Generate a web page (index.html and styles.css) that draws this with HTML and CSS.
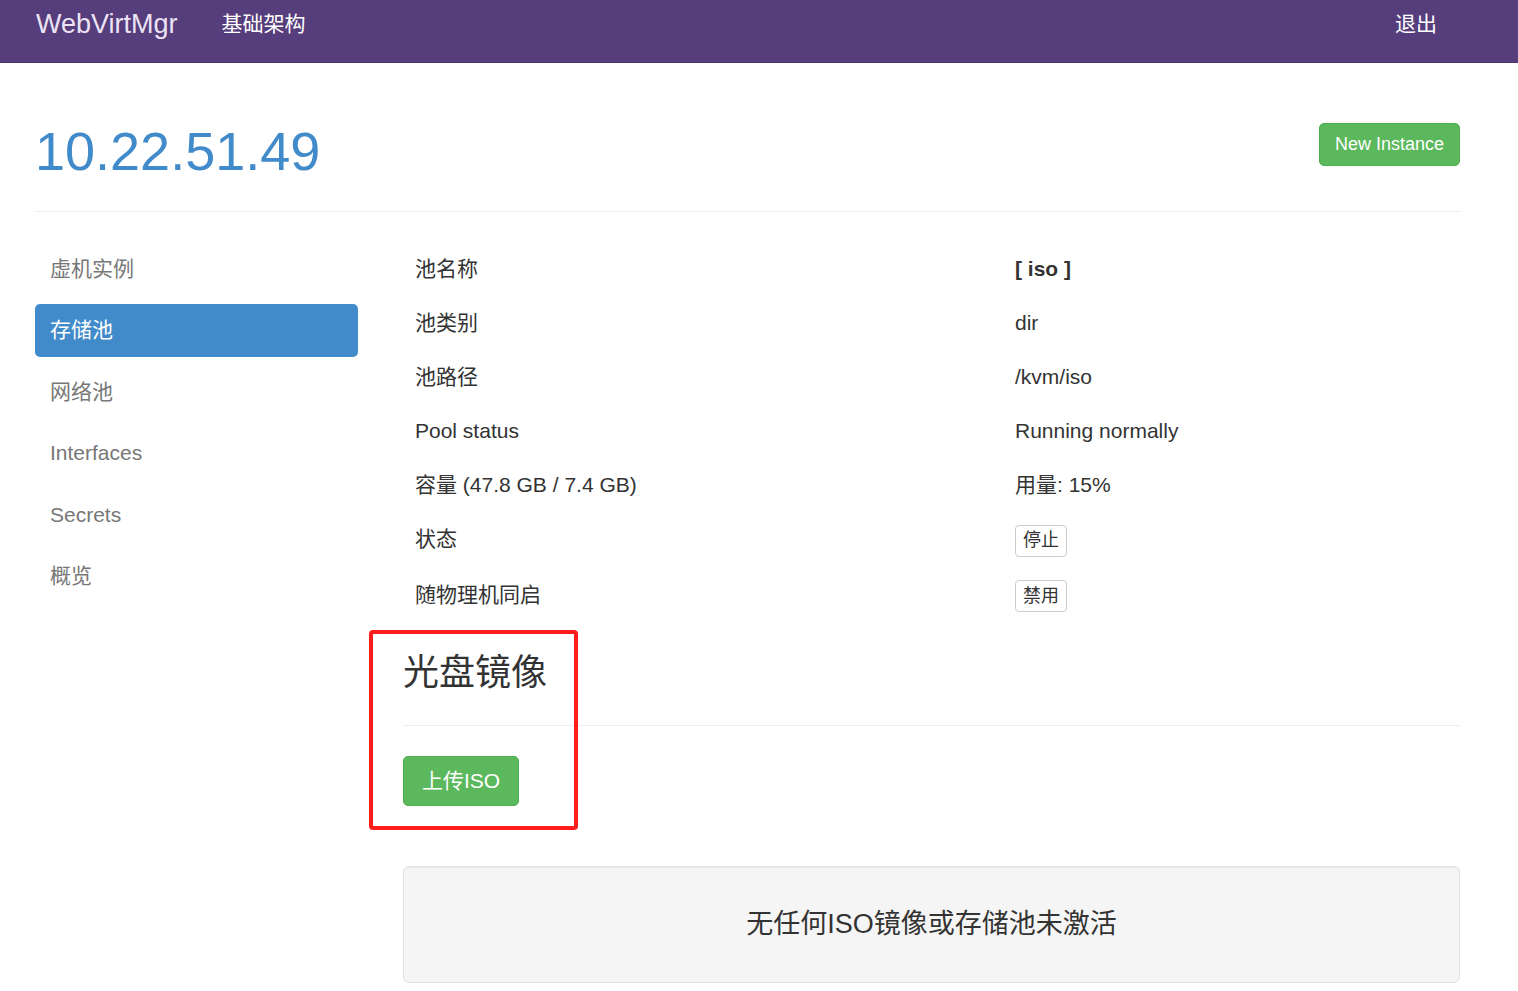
FILE: index.html
```html
<!DOCTYPE html>
<html lang="zh-CN">
<head>
<meta charset="utf-8">
<title>WebVirtMgr</title>
<link rel="stylesheet" href="styles.css">
</head>
<body>
<nav class="navbar">
  <a class="brand" href="#">WebVirtMgr</a>
  <a class="nav-link" href="#">基础架构</a>
  <a class="nav-link nav-right" href="#">退出</a>
</nav>
<div class="container">
  <div class="page-header">
    <h1 class="host-title">10.22.51.49</h1>
    <a class="btn btn-success btn-sm" href="#">New Instance</a>
  </div>
  <div class="row">
    <aside class="sidebar">
      <ul class="pills">
        <li><a href="#">虚机实例</a></li>
        <li class="active"><a href="#">存储池</a></li>
        <li><a href="#">网络池</a></li>
        <li><a href="#">Interfaces</a></li>
        <li><a href="#">Secrets</a></li>
        <li><a href="#">概览</a></li>
      </ul>
    </aside>
    <main class="content">
      <table class="info">
        <tr><td class="label-col">池名称</td><td><strong>[ iso ]</strong></td></tr>
        <tr><td class="label-col">池类别</td><td>dir</td></tr>
        <tr><td class="label-col">池路径</td><td>/kvm/iso</td></tr>
        <tr><td class="label-col">Pool status</td><td>Running normally</td></tr>
        <tr><td class="label-col">容量 (47.8 GB / 7.4 GB)</td><td>用量: 15%</td></tr>
        <tr class="btn-row"><td class="label-col">状态</td><td><button class="btn-xs">停止</button></td></tr>
        <tr class="btn-row"><td class="label-col">随物理机同启</td><td><button class="btn-xs">禁用</button></td></tr>
      </table>
      <h3 class="section-title">光盘镜像</h3>
      <a class="btn btn-success btn-upload" href="#">上传ISO</a>
      <div class="well">
        <h4>无任何ISO镜像或存储池未激活</h4>
      </div>
    </main>
  </div>
</div>
<div class="annotation"></div>
</body>
</html>
```

FILE: styles.css
```css
* { box-sizing: border-box; }
html, body { margin: 0; padding: 0; }
body {
  font-family: "Liberation Sans", "Noto Sans CJK SC", sans-serif;
  font-size: 21px;
  line-height: 30px;
  color: #333;
  background: #fff;
  position: relative;
  min-height: 991px;
}
a { text-decoration: none; }

.navbar {
  height: 63px;
  background: #563d7c;
  border-bottom: 1px solid #4d3670;
  display: flex;
  align-items: flex-start;
  padding: 9px 58px 0 36px;
}
.brand {
  color: #ece4f5;
  font-size: 27px;
  line-height: 30px;
}
.nav-link {
  color: #fff;
  font-size: 21px;
  line-height: 30px;
  margin-left: 44px;
}
.nav-right {
  margin-left: auto;
  padding-right: 23px;
}

.container {
  padding: 0 58px 0 35px;
}
.page-header {
  display: flex;
  justify-content: space-between;
  align-items: flex-start;
  margin-top: 59px;
  padding-bottom: 30px;
  border-bottom: 1px solid #eee;
}
.host-title {
  margin: 0;
  font-size: 54px;
  line-height: 59.4px;
  font-weight: 500;
  color: #428bca;
}
.btn {
  display: inline-block;
  border: 1px solid transparent;
  border-radius: 5px;
  text-align: center;
  color: #fff;
}
.btn-success {
  background: #5cb85c;
  border-color: #4cae4c;
}
.btn-sm {
  font-size: 18px;
  line-height: 27px;
  padding: 7px 15px;
  margin-top: 1px;
}

.row {
  display: flex;
  margin-top: 30px;
  gap: 45px;
}
.sidebar {
  width: 323px;
  flex: none;
}
.pills {
  list-style: none;
  margin: 0;
  padding: 0;
}
.pills li + li { margin-top: 8.5px; }
.pills a {
  display: block;
  padding: 11.5px 15px;
  line-height: 30px;
  color: #777;
  border-radius: 5px;
}
.pills li.active a {
  background: #428bca;
  color: #fff;
}

.content {
  flex: 1;
  min-width: 0;
}
.info {
  width: 100%;
  border-collapse: collapse;
  margin: 0;
}
.info td {
  padding: 12px;
  line-height: 30px;
  vertical-align: top;
}
.info td.label-col { width: 600px; }
.info strong { font-weight: bold; }
.btn-xs {
  font-family: inherit;
  font-size: 18px;
  line-height: 27px;
  padding: 1.5px 7px;
  background: #fff;
  color: #333;
  border: 1px solid #ccc;
  border-radius: 4px;
  display: inline-block;
}
.btn-row td { padding-top: 12px; padding-bottom: 11px; }

.section-title {
  margin: 30px 0 0;
  font-size: 36px;
  line-height: 39.6px;
  font-weight: 400;
  padding-bottom: 32px;
  border-bottom: 1px solid #eee;
}
.btn-upload {
  margin-top: 30px;
  font-size: 21px;
  line-height: 30px;
  padding: 9px 18px;
}
.well {
  margin-top: 60px;
  background: #f5f5f5;
  border: 1px solid #e3e3e3;
  border-radius: 6px;
  box-shadow: inset 0 1px 1px rgba(0,0,0,.05);
  padding: 42px 20px 43px;
  text-align: center;
}
.well h4 {
  margin: 0;
  font-size: 27px;
  line-height: 30px;
  font-weight: 400;
  color: #333;
}

.annotation {
  position: absolute;
  left: 369px;
  top: 630px;
  width: 209px;
  height: 200px;
  border: 4px solid #fe1d1d;
  border-radius: 4px;
  pointer-events: none;
}
```
